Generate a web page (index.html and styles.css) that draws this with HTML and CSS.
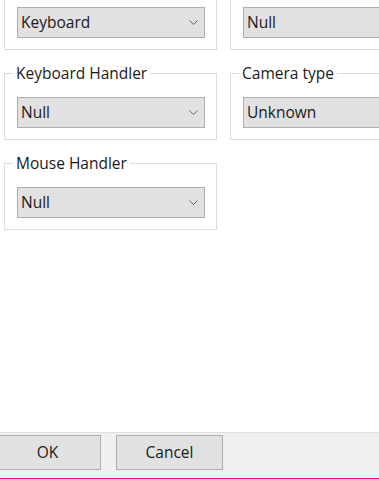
FILE: index.html
```html
<!DOCTYPE html>
<html>
<head>
  <link rel="stylesheet" href="styles.css">
</head>
<body>
  <div class="dialog">
    <div class="settings">
      <div class="group">
        <div class="combo"><span>Keyboard</span><svg class="chevron" width="9" height="5" viewBox="0 0 9 5"><path d="M0.5 0.5 L4.5 4.5 L8.5 0.5" fill="none" stroke="#606060" stroke-width="1"/></svg></div>
      </div>
      <div class="group">
        <div class="combo"><span>Null</span><svg class="chevron" width="9" height="5" viewBox="0 0 9 5"><path d="M0.5 0.5 L4.5 4.5 L8.5 0.5" fill="none" stroke="#606060" stroke-width="1"/></svg></div>
      </div>
      <div class="group">
        <span class="group-title">Keyboard Handler</span>
        <div class="combo"><span>Null</span><svg class="chevron" width="9" height="5" viewBox="0 0 9 5"><path d="M0.5 0.5 L4.5 4.5 L8.5 0.5" fill="none" stroke="#606060" stroke-width="1"/></svg></div>
      </div>
      <div class="group">
        <span class="group-title">Camera type</span>
        <div class="combo"><span>Unknown</span><svg class="chevron" width="9" height="5" viewBox="0 0 9 5"><path d="M0.5 0.5 L4.5 4.5 L8.5 0.5" fill="none" stroke="#606060" stroke-width="1"/></svg></div>
      </div>
      <div class="group">
        <span class="group-title">Mouse Handler</span>
        <div class="combo"><span>Null</span><svg class="chevron" width="9" height="5" viewBox="0 0 9 5"><path d="M0.5 0.5 L4.5 4.5 L8.5 0.5" fill="none" stroke="#606060" stroke-width="1"/></svg></div>
      </div>
    </div>
    <div class="button-bar">
      <button class="btn btn-ok">OK</button>
      <button class="btn">Cancel</button>
    </div>
  </div>
</body>
</html>
```
FILE: styles.css
```css
html, body {
  margin: 0;
  padding: 0;
  background-color: #fff;
  overflow: hidden;
}

body {
  font-family: "Open Sans", "Noto Sans", sans-serif;
  font-size: 15.5px;
  color: #1a1a1a;
}

.dialog {
  width: 379px;
  height: 479px;
  display: flex;
  flex-direction: column;
  border-bottom: 1px solid #e8127c;
  box-sizing: border-box;
}

/* the dialog is scrolled a little, so the first row is cut off at the top */
.settings {
  flex: 1;
  overflow: hidden;
  display: grid;
  grid-template-columns: 213px 213px;
  grid-auto-rows: 67px;
  column-gap: 13px;
  row-gap: 23px;
  align-content: start;
  padding-left: 4px;
  margin-top: -17px;
}

.group {
  position: relative;
  border: 1px solid #dcdcdc;
  padding: 23px 11px 0 12px;
}

.group-title {
  position: absolute;
  top: -11px;
  left: 8px;
  padding: 0 3px;
  background-color: #fff;
  line-height: 20px;
  white-space: nowrap;
}

.combo {
  height: 31px;
  box-sizing: border-box;
  border: 1px solid #adadad;
  background-color: #e1e1e1;
  display: flex;
  align-items: center;
  justify-content: space-between;
  padding: 0 6px 2px 3px;
}

.chevron {
  display: block;
  margin-top: 2px;
}

.button-bar {
  height: 46px;
  box-sizing: border-box;
  border-top: 1px solid #dfdfdf;
  background-color: #f0f0f0;
  display: flex;
  gap: 15px;
  padding-top: 2px;
  align-items: flex-start;
}

.btn {
  width: 107px;
  height: 35px;
  border: 1px solid #adadad;
  background-color: #e1e1e1;
  font-family: inherit;
  font-size: 15.5px;
  color: #1a1a1a;
  padding: 0 0 2px 0;
}

.btn-ok {
  margin-left: -6px;
}
```
